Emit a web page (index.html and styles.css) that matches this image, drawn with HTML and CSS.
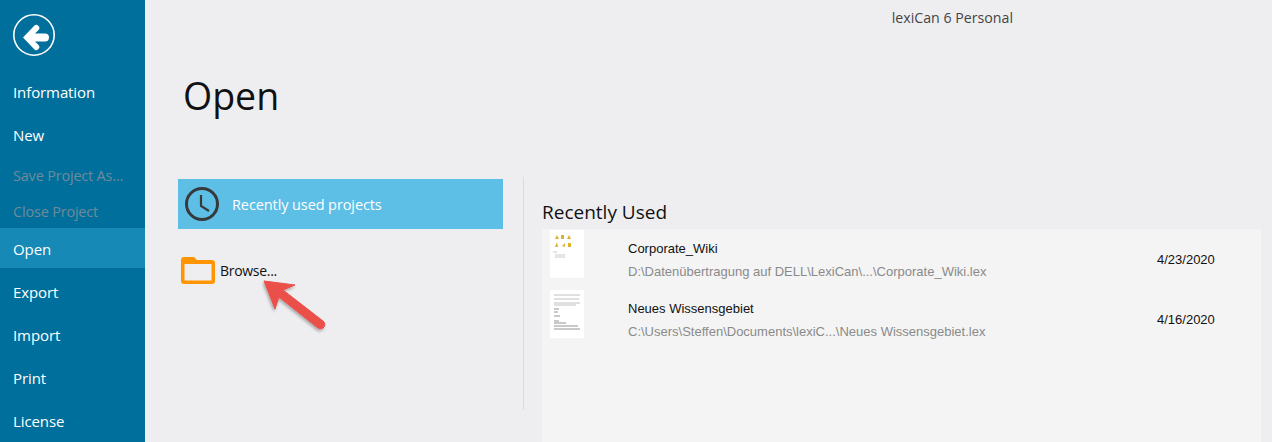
FILE: index.html
```html
<!DOCTYPE html>
<html>
<head>
    <title>lexiCan 6 Personal</title>
    <link rel="stylesheet" href="styles.css">
</head>
<body>
    <div class="sidebar">
        <svg class="back" width="44" height="44" viewBox="0 0 44 44">
            <circle cx="21" cy="21" r="20.2" fill="none" stroke="#fff" stroke-width="1.6"/>
            <path d="M10 23.5 L21 12 A3 3 0 0 1 25.5 16 L22 19.5 H32 A4 4 0 0 1 32 27.5 H22 L25.5 31 A3 3 0 0 1 21 35 Z" fill="#fff"/>
        </svg>
        <div class="nav-item">Information</div>
        <div class="nav-item">New</div>
        <div class="nav-item disabled save">Save Project As...</div>
        <div class="nav-item disabled close">Close Project</div>
        <div class="nav-item active">Open</div>
        <div class="nav-item">Export</div>
        <div class="nav-item">Import</div>
        <div class="nav-item">Print</div>
        <div class="nav-item">License</div>
    </div>

    <div class="main">
        <div class="app-title">lexiCan 6 Personal</div>
        <h1>Open</h1>
        <div class="columns">
            <div class="left">
                <div class="recent-btn">
                    <svg width="36" height="36" viewBox="0 0 36 36">
                        <circle cx="18" cy="18" r="15.5" fill="none" stroke="#37393b" stroke-width="3"/>
                        <path d="M17 9 V20 L25 25" fill="none" stroke="#37393b" stroke-width="2.2"/>
                    </svg>
                    <span>Recently used projects</span>
                </div>
                <div class="browse">
                    <svg width="34" height="27" viewBox="0 0 34 27">
                        <path d="M0 3 Q0 0 3 0 H13 L16 3 H31 Q34 3 34 6 V24 Q34 27 31 27 H3 Q0 27 0 24 Z M3.5 7 V23.5 H30.5 V7 Z" fill="#ff9500" fill-rule="evenodd"/>
                    </svg>
                    <span>Browse...</span>
                </div>
            </div>
            <div class="right">
                <h2>Recently Used</h2>
                <div class="file-list">
                    <div class="file-row">
                        <svg class="thumb" width="34" height="48" viewBox="0 0 34 48">
                            <rect width="34" height="48" fill="#fff"/>
                            <path d="M5 9 L7 5 L9 9 Z M11 5 H14 V9 H11 Z M17 9 L19 5 L21 9 Z M5 17 L7 12 L8 17 Z M12 16 L15 13 L15 17 Z M18 13 H21 V17 H18 Z" fill="#e0b030"/>
                            <path d="M3 22 H7 M5 25 H15 M5 27 H15" stroke="#aaa" stroke-width="0.6"/>
                        </svg>
                        <div class="file-info">
                            <div class="file-name">Corporate_Wiki</div>
                            <div class="file-path">D:\Datenübertragung auf DELL\LexiCan\...\Corporate_Wiki.lex</div>
                        </div>
                        <div class="file-date">4/23/2020</div>
                    </div>
                    <div class="file-row">
                        <svg class="thumb" width="34" height="48" viewBox="0 0 34 48">
                            <rect width="34" height="48" fill="#fff"/>
                            <path d="M4 5 H30 M4 9 H29 M4 13 H30 M4 15 H26" stroke="#999" stroke-width="0.6"/>
                            <path d="M4 19 H9 M4 22 H8 M4 26 H10 M4 31 H9 M4 33 H16 M4 36 H28 M4 39 H30" stroke="#666" stroke-width="0.7"/>
                        </svg>
                        <div class="file-info">
                            <div class="file-name">Neues Wissensgebiet</div>
                            <div class="file-path">C:\Users\Steffen\Documents\lexiC...\Neues Wissensgebiet.lex</div>
                        </div>
                        <div class="file-date">4/16/2020</div>
                    </div>
                </div>
            </div>
        </div>
        <svg class="arrow" width="80" height="62" viewBox="0 0 80 62">
            <defs>
                <filter id="arrow-shadow" x="-20%" y="-20%" width="140%" height="140%">
                    <feDropShadow dx="-1" dy="2" stdDeviation="1.5" flood-color="#000" flood-opacity="0.3"/>
                </filter>
            </defs>
            <path d="M2 3 L33 7 L21 12 L61 43 A4 4 0 0 1 56 50 L17 19 L13 31 Z" fill="#ea4f49" stroke="#ea4f49" stroke-width="1" stroke-linejoin="round" filter="url(#arrow-shadow)"/>
        </svg>
    </div>
</body>
</html>
```

FILE: styles.css
```css
html, body {
    height: 100%;
}
body {
    margin: 0;
    display: flex;
    height: 442px;
    overflow: hidden;
    font-family: "Open Sans", "Noto Sans", sans-serif;
    background-color: #eeeef1;
}
.sidebar {
    width: 145px;
    flex-shrink: 0;
    background-color: #006f9c;
    color: #fff;
    padding-top: 14px;
    box-sizing: border-box;
}
.back {
    display: block;
    margin: 0 0 13px 13px;
}
.nav-item {
    height: 43px;
    line-height: 43px;
    padding-left: 13px;
    font-size: 15px;
    letter-spacing: -0.1px;
    white-space: nowrap;
}
.nav-item.disabled {
    color: #6f8a9a;
    font-size: 14.5px;
    letter-spacing: -0.2px;
}
.nav-item.save {
    height: 38px;
    line-height: 38px;
}
.nav-item.close {
    height: 33px;
    line-height: 33px;
}
.nav-item.active {
    height: 40px;
    line-height: 42px;
    margin-bottom: 3px;
    background-color: #1689b6;
}
.main {
    flex: 1;
    position: relative;
}
.app-title {
    padding: 9px 259px 0 0;
    text-align: right;
    font-size: 14.2px;
    line-height: 18px;
    color: #444;
}
h1 {
    margin: 44px 0 0 38px;
    font-size: 37.5px;
    line-height: 50px;
    font-weight: 400;
    color: #111;
}
.columns {
    display: flex;
    margin: 56px 0 0 33px;
}
.left {
    width: 325px;
    padding-top: 2px;
}
.recent-btn {
    height: 50px;
    background-color: #5dbee6;
    display: flex;
    align-items: center;
    padding-left: 6px;
    color: #fff;
    font-size: 14.5px;
    letter-spacing: -0.1px;
}
.recent-btn span {
    margin-left: 12px;
}
.browse {
    display: flex;
    align-items: center;
    margin: 28px 0 0 3px;
    font-size: 14px;
    letter-spacing: -0.3px;
    color: #111;
}
.browse span {
    margin-left: 5px;
}
.right {
    margin-left: 20px;
    border-left: 1px solid #dcdce0;
    padding-left: 18px;
    width: 719px;
    height: 233px;
}
h2 {
    margin: 22px 0 0;
    font-size: 19px;
    line-height: 26px;
    font-weight: 400;
    color: #111;
}
.file-list {
    margin-top: 4px;
    height: 213px;
    background-color: #f4f4f4;
    font-family: "Liberation Sans", Arial, sans-serif;
}
.file-row {
    display: flex;
    height: 60px;
    padding-left: 8px;
    box-sizing: border-box;
    padding-top: 1px;
}
.thumb {
    flex-shrink: 0;
}
.file-info {
    margin-left: 44px;
    width: 529px;
    padding-top: 11px;
}
.file-name {
    font-size: 13px;
    line-height: 15px;
    color: #111;
}
.file-path {
    margin-top: 8px;
    font-size: 13px;
    line-height: 16px;
    color: #8a8a8a;
}
.file-date {
    font-size: 13px;
    line-height: 15px;
    padding-top: 22px;
    color: #111;
}
.arrow {
    position: absolute;
    left: 117px;
    top: 278px;
}
```
